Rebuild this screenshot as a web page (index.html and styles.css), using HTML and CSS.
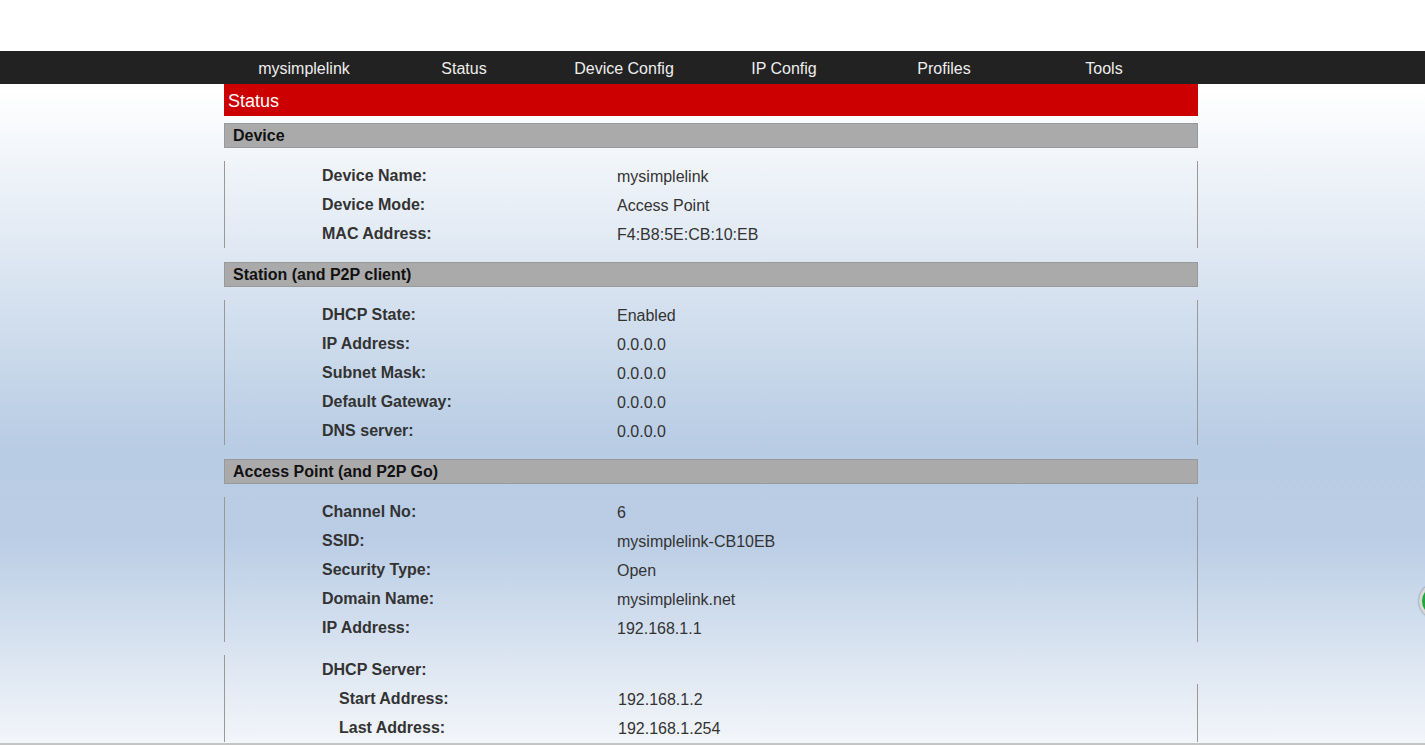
FILE: index.html
```html
<!DOCTYPE html>
<html>
<head>
  <meta charset="utf-8">
  <title>mysimplelink - Status</title>
  <link rel="stylesheet" href="styles.css">
</head>
<body>
  <div class="top-space"></div>
  <div class="nav-bar">
    <ul class="nav-menu">
      <li>mysimplelink</li>
      <li>Status</li>
      <li>Device Config</li>
      <li>IP Config</li>
      <li>Profiles</li>
      <li>Tools</li>
    </ul>
  </div>

  <div class="page">
    <div class="page-title">Status</div>

    <!-- Device -->
    <div class="section-title">Device</div>
    <div class="section-body">
      <div class="row"><span class="label">Device Name:</span><span class="value">mysimplelink</span></div>
      <div class="row"><span class="label">Device Mode:</span><span class="value">Access Point</span></div>
      <div class="row"><span class="label">MAC Address:</span><span class="value">F4:B8:5E:CB:10:EB</span></div>
    </div>

    <!-- Station -->
    <div class="section-title">Station (and P2P client)</div>
    <div class="section-body">
      <div class="row"><span class="label">DHCP State:</span><span class="value">Enabled</span></div>
      <div class="row"><span class="label">IP Address:</span><span class="value">0.0.0.0</span></div>
      <div class="row"><span class="label">Subnet Mask:</span><span class="value">0.0.0.0</span></div>
      <div class="row"><span class="label">Default Gateway:</span><span class="value">0.0.0.0</span></div>
      <div class="row"><span class="label">DNS server:</span><span class="value">0.0.0.0</span></div>
    </div>

    <!-- Access point -->
    <div class="section-title">Access Point (and P2P Go)</div>
    <div class="section-body">
      <div class="row"><span class="label">Channel No:</span><span class="value">6</span></div>
      <div class="row"><span class="label">SSID:</span><span class="value">mysimplelink-CB10EB</span></div>
      <div class="row"><span class="label">Security Type:</span><span class="value">Open</span></div>
      <div class="row"><span class="label">Domain Name:</span><span class="value">mysimplelink.net</span></div>
      <div class="row"><span class="label">IP Address:</span><span class="value">192.168.1.1</span></div>
    </div>

    <div class="dhcp-block">
      <div class="row"><span class="label">DHCP Server:</span><span class="value"></span></div>
      <div class="dhcp-sub">
        <div class="row sub-row"><span class="label">Start Address:</span><span class="value">192.168.1.2</span></div>
        <div class="row sub-row"><span class="label">Last Address:</span><span class="value">192.168.1.254</span></div>
      </div>
    </div>
  </div>

  <div class="side-widget"></div>
</body>
</html>
```

FILE: styles.css
```css
html, body {
    margin: 0;
    padding: 0;
}

body {
    height: 743px;
    overflow: hidden;
    position: relative;
    font-family: "Liberation Sans", Arial, sans-serif;
    color: #333;
    background: linear-gradient(#ffffff 0%, #ffffff 12%, #b8cce4 60%, #bacde5 72%, #f3f6fa 100%);
    border-bottom: 2px solid #c4c4c4;
}

.top-space {
    height: 51px;
    background: #fff;
}

/* 导航条 */
.nav-bar {
    height: 33px;
    background: #222;
}

.nav-menu {
    list-style: none;
    margin: 0 0 0 224px;
    padding: 0;
    display: flex;
}

.nav-menu li {
    width: 160px;
    text-align: center;
    line-height: 35px;
    font-size: 16px;
    color: #eee;
}

/* 内容区 */
.page {
    width: 974px;
    margin-left: 224px;
}

.page-title {
    height: 32px;
    line-height: 34px;
    padding-left: 4px;
    background: #cc0000;
    color: #fff;
    font-size: 18px;
    margin-bottom: 7px;
}

.section-title {
    height: 23px;
    line-height: 24px;
    padding-left: 8px;
    background: #aaa;
    border: 1px solid #999;
    color: #111;
    font-size: 16px;
    font-weight: bold;
    margin-bottom: 13px;
}

.section-body {
    border-left: 1px solid #999;
    border-right: 1px solid #999;
    margin-bottom: 14px;
}

.row {
    display: grid;
    grid-template-columns: 295px 1fr;
    height: 29px;
    align-items: center;
    padding-left: 97px;
    font-size: 16px;
}

.label {
    font-weight: bold;
    color: #333;
}

.value {
    color: #333;
    padding-top: 2px;
}

.dhcp-block {
    border-left: 1px solid #999;
    margin-top: -1px;
}

.dhcp-sub {
    border-right: 1px solid #999;
}

.sub-row {
    grid-template-columns: 279px 1fr;
    padding-left: 114px;
}

/* 右侧浮动小部件 */
.side-widget {
    position: absolute;
    left: 1419px;
    top: 583px;
    width: 30px;
    height: 30px;
    border-radius: 50%;
    background: #1fa83a;
    border: 3px solid #d8d8d8;
    box-shadow: 0 0 2px rgba(0, 0, 0, 0.5);
}
```
